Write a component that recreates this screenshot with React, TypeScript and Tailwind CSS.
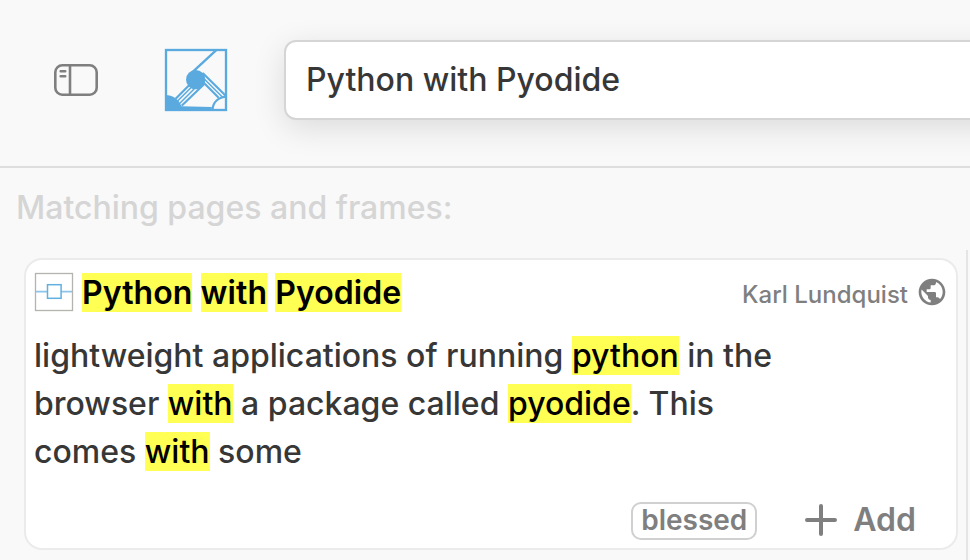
import React from "react";

function Mark({ children }: { children: React.ReactNode }) {
  return <mark className="bg-[#ffff54] text-black">{children}</mark>;
}

function SidebarIcon() {
  return (
    <svg width="46" height="34" viewBox="0 0 46 34" fill="none" stroke="#7f7f7f" strokeWidth="2.6" strokeLinecap="round">
      <rect x="2.3" y="2.3" width="41.4" height="29.4" rx="7" />
      <path d="M17 2.3V31.7" strokeLinecap="butt" />
      <path d="M7.6 8.2H12.3M7.6 13.2H12.3" strokeWidth="2.4" />
    </svg>
  );
}

function Logo() {
  return (
    <svg width="64" height="64" viewBox="27 24 192 192" fill="none" stroke="#5aaadf" strokeWidth="7">
      <rect x="33" y="30" width="180" height="180" />
      <path d="M183 31L101 107" />
      <circle cx="122" cy="119" r="29" fill="#5aaadf" stroke="none" />
      <path d="M30 165C54 165 72 178 79 199L170 201V213H30Z" fill="#5aaadf" stroke="none" />
      <path d="M62 176L103 135M80 197L147 133" strokeWidth="6.5" />
      <path d="M67 184L110 141M73 191L118 146" strokeWidth="4.5" />
      <path d="M143 99L213 168M144 126L191 173" strokeWidth="6.5" />
      <path d="M147 116L202 171" strokeWidth="4.5" />
      <path d="M172 210C174 187 190 171 216 169" />
    </svg>
  );
}

function FlagIcon() {
  return (
    <svg width="40" height="40" viewBox="0 0 40 40" fill="none" className="shrink-0">
      <rect x="1.5" y="1.5" width="37" height="37" stroke="#b5b3ae" strokeWidth="1.3" />
      <path d="M2 19.7H13M27 19.7H38" stroke="#8cc4ea" strokeWidth="1.8" />
      <rect x="13.5" y="12.7" width="13.6" height="13.6" stroke="#62b0e0" strokeWidth="1.5" />
    </svg>
  );
}

function GlobeIcon() {
  return (
    <svg width="32" height="32" viewBox="0 0 24 24" fill="#7f7f7f">
      <path d="M12 2C6.48 2 2 6.48 2 12s4.48 10 10 10 10-4.48 10-10S17.52 2 12 2zm-1 17.93c-3.95-.49-7-3.85-7-7.93 0-.62.08-1.21.21-1.79L9 15v1c0 1.1.9 2 2 2v1.93zm6.9-2.54c-.26-.81-1-1.39-1.9-1.39h-1v-3c0-.55-.45-1-1-1H8v-2h2c.55 0 1-.45 1-1V7h2c1.1 0 2-.9 2-2v-.41c2.93 1.19 5 4.06 5 7.41 0 2.08-.8 3.97-2.1 5.39z" />
    </svg>
  );
}

export default function App() {
  return (
    <div className="flex h-[560px] w-[970px] flex-col overflow-hidden bg-[#f9f9f9] font-[Inter,sans-serif] text-[32px] text-[#373737]">
      <header className="flex h-[168px] shrink-0 items-start border-b-2 border-[#dedede]">
        <div className="ml-[53px] mt-[63px]"><SidebarIcon /></div>
        <div className="ml-[65px] mt-12"><Logo /></div>
        <div className="ml-14 mt-10 flex h-20 w-[800px] shrink-0 items-center rounded-xl border-2 border-[#d5d5d5] bg-white px-5 font-[450] shadow-[0_8px_32px_rgba(0,0,0,0.12)]">
          Python with Pyodide
        </div>
      </header>
      <main className="flex grow">
        <section className="w-[966px] shrink-0 pl-4 pt-4">
          <h2 className="h-12 font-medium leading-[48px] text-[#d5d5d5]">Matching pages and frames:</h2>
          <article className="ml-2 mt-[26px] flex h-[292px] w-[934px] flex-col rounded-[18px] border-2 border-[#ebebeb] bg-white pl-2 pr-2 pt-3">
            <div className="flex h-10 items-center">
              <FlagIcon />
              <h3 className="ml-2 mt-0.5 whitespace-nowrap font-semibold leading-10 tracking-[0.07px] text-black">
                <Mark>Python</Mark> <Mark>with</Mark> <Mark>Pyodide</Mark>
              </h3>
              <span className="ml-auto mt-1.5 text-2xl font-[450] text-[#7f7f7f]">Karl Lundquist</span>
              <span className="ml-2"><GlobeIcon /></span>
            </div>
            <p className="mt-5 font-medium leading-[48px] whitespace-nowrap">
              lightweight applications of running <Mark>python</Mark> in the<br />
              browser <Mark>with</Mark> a package called <Mark>pyodide</Mark>. This<br />
              comes <Mark>with</Mark> some
            </p>
            <div className="mt-6 flex items-center justify-end pr-8 font-semibold text-[#7f7f7f]">
              <span className="mt-0.5 flex h-[38px] w-[126px] items-center justify-center rounded-[10px] border-2 border-[#d0d0d0] pb-0.5 text-[28px]">blessed</span>
              <svg className="ml-12" width="32" height="32" viewBox="0 0 32 32" stroke="#7f7f7f" strokeWidth="4" strokeLinecap="round">
                <path d="M2 16H30M16 2V30" />
              </svg>
              <span className="ml-4 leading-10">Add</span>
            </div>
          </article>
        </section>
        <div className="mt-[82px] w-0.5 bg-[#e5e5e5]" />
      </main>
    </div>
  );
}
